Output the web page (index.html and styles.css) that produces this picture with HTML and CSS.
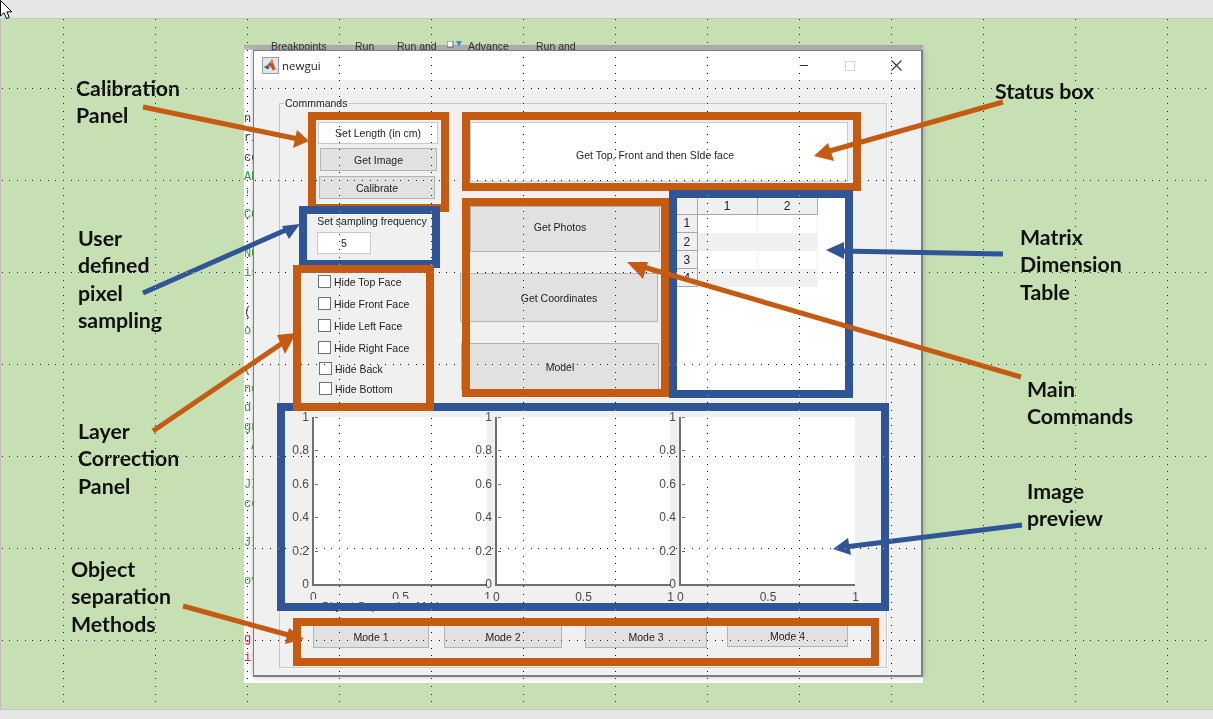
FILE: index.html
```html
<!DOCTYPE html>
<html>
  <head>
    <title>newgui annotated</title>
    <link rel="stylesheet" href="styles.css">
  </head>
  <body>
    <div class="screen">
      <div class="top-bar"></div>
      <div class="desktop"></div>
      <div class="bottom-bar"></div>

      <!-- the matlab editor that peeks out behind the figure -->
      <div class="editor">
        <div class="toolbar">
          <span>Breakpoints</span>
          <span>Run</span>
          <span>Run and</span>
          <svg class="toolbar-icon" width="16" height="8" viewBox="0 0 16 8"><rect x="0" y="0" width="6" height="6" fill="#fff" stroke="#666"/><path d="M9 0l6 0-3 6z" fill="#4a8fc4"/></svg>
          <span>Advance</span>
          <span>Run and</span>
        </div>
        <pre class="code"><span>n 4</span>
<span>ri</span>
<span>cg</span>
<span class="green">AB</span>
<span class="green">'</span>
<span class="green">CO</span>

<span class="green">NG</span>
<span class="green">is</span>

<span>('</span>
<span class="green">or</span>

<span>('</span>
<span class="green">ng</span>
<span class="green">d</span>
<span class="green">gn</span>
<span class="green"> A</span>

<span class="green">JI</span>
<span class="green">ce</span>

<span class="green">JI</span>

<span class="green">ov</span>


<span class="red">g</span>
<span class="red">ir</span></pre>
      </div>

      <div class="window">
        <div class="titlebar">
          <svg class="app-icon" width="17" height="17" viewBox="0 0 17 17">
            <rect x="0.5" y="0.5" width="16" height="16" fill="#dfe6ee" stroke="#9a9a9a"/>
            <path d="M2 10l3-1.500 3-3.500 2-3 3 9 2 2-2.500-1-1.500 2-2-4-1.500-1-2.500 2z" fill="#c8511b"/>
            <path d="M2 10l3-1.500 3 2-2.500 2z" fill="#2f6fa8"/>
            <path d="M8 5l2-3 1 6z" fill="#e88a2c"/>
          </svg>
          <span class="window-title">newgui</span>
          <div class="window-controls">
            <span class="ctl-min"></span>
            <span class="ctl-max"></span>
            <svg class="ctl-close" width="11" height="11" viewBox="0 0 11 11"><path d="M0.500 0.500l10 10M10.500 0.500l-10 10" stroke="#333" stroke-width="1.100" fill="none"/></svg>
          </div>
        </div>
        <div class="window-body">
          <fieldset class="panel">
            <legend>Commmands</legend>
            <div class="controls">
              <div class="left-col">
                <div class="edit set-length">Set Length (in cm)</div>
                <button class="btn get-image">Get Image</button>
                <button class="btn calibrate">Calibrate</button>
                <div class="sampling-label">Set sampling frequency</div>
                <div class="edit sampling-input">5</div>
                <div class="checks">
                  <label class="check"><span class="box"></span>Hide Top Face</label>
                  <label class="check"><span class="box"></span>Hide Front Face</label>
                  <label class="check"><span class="box"></span>Hide Left Face</label>
                  <label class="check"><span class="box"></span>Hide Right Face</label>
                  <label class="check shifted"><span class="box"></span>Hide Back</label>
                  <label class="check shifted"><span class="box"></span>Hide Bottom</label>
                </div>
              </div>
              <div class="status">Get Top, Front and then SIde face</div>
              <div class="main-col">
                <button class="btn get-photos">Get Photos</button>
                <button class="btn get-coords">Get Coordinates</button>
                <button class="btn model">Model</button>
              </div>
              <div class="table-wrap">
                <table class="matrix">
                  <tr><th></th><th>1</th><th>2</th></tr>
                  <tr><th>1</th><td></td><td></td></tr>
                  <tr class="odd"><th>2</th><td></td><td></td></tr>
                  <tr><th>3</th><td></td><td></td></tr>
                  <tr class="odd"><th>4</th><td></td><td></td></tr>
                </table>
              </div>
            </div>

            <div class="plots">
              <div class="axes">
                <div class="y-ticks"><span>1</span><span>0.8</span><span>0.6</span><span>0.4</span><span>0.2</span><span>0</span></div>
                <div class="x-ticks"><span>0</span><span>0.5</span><span>1</span></div>
              </div>
              <div class="axes">
                <div class="y-ticks"><span>1</span><span>0.8</span><span>0.6</span><span>0.4</span><span>0.2</span><span>0</span></div>
                <div class="x-ticks"><span>0</span><span>0.5</span><span>1</span></div>
              </div>
              <div class="axes">
                <div class="y-ticks"><span>1</span><span>0.8</span><span>0.6</span><span>0.4</span><span>0.2</span><span>0</span></div>
                <div class="x-ticks"><span>0</span><span>0.5</span><span>1</span></div>
              </div>
              <div class="mode-title">Object Separation Mode:</div>
            </div>

            <div class="modes">
              <button class="btn mode-1">Mode 1</button>
              <button class="btn mode-2">Mode 2</button>
              <button class="btn mode-3">Mode 3</button>
              <button class="btn mode-4">Mode 4</button>
            </div>
          </fieldset>
        </div>
      </div>

      <!-- annotation boxes and arrows, drawn on top of the screenshot -->
      <svg class="marks" width="1213" height="719" viewBox="0 0 1213 719">
        <rect class="inner-line" x="316.500" y="120.500" width="124" height="83"/>
        <g class="orange-box">
          <rect x="312" y="116" width="133" height="92"/>
          <rect x="466" y="116" width="391" height="71"/>
          <rect x="466" y="202" width="199" height="191"/>
        </g>
        <g class="blue-box">
          <rect x="303" y="210" width="133" height="54"/>
          <rect x="673" y="194" width="176" height="200"/>
          <rect x="281" y="407" width="604" height="200"/>
        </g>
        <g class="orange-box">
          <rect x="297" y="269" width="133" height="138"/>
          <rect x="297" y="622" width="578" height="40"/>
        </g>
        <g class="orange-arrow">
          <line x1="143" y1="107" x2="298" y2="139"/>
          <polygon points="309,141 293,148 297,130"/>
          <line x1="1003" y1="102" x2="826" y2="152"/>
          <polygon points="814,156 828,143 834,161"/>
          <line x1="1021" y1="377" x2="640" y2="266"/>
          <polygon points="627,262 648,262 643,279"/>
          <line x1="153" y1="431" x2="284" y2="342"/>
          <polygon points="296,333 277,335 285,354"/>
          <line x1="183" y1="606" x2="292" y2="636"/>
          <polygon points="304,639 289,628 285,644"/>
        </g>
        <g class="blue-arrow">
          <line x1="143" y1="293" x2="288" y2="229"/>
          <polygon points="300,224 282,226 289,239"/>
          <line x1="1003" y1="254" x2="840" y2="251"/>
          <polygon points="826,250 844,242 844,259"/>
          <line x1="1022" y1="525" x2="845" y2="547"/>
          <polygon points="833,549 848,538 851,555"/>
        </g>
      </svg>

      <div class="note note-calibration">Calibration<br>Panel</div>
      <div class="note note-user">User<br>defined<br>pixel<br>sampling</div>
      <div class="note note-layer">Layer<br>Correction<br>Panel</div>
      <div class="note note-object">Object<br>separation<br>Methods</div>
      <div class="note note-status">Status box</div>
      <div class="note note-matrix">Matrix<br>Dimension<br>Table</div>
      <div class="note note-main">Main<br>Commands</div>
      <div class="note note-image">Image<br>preview</div>

      <!-- snap grid of the slide editor, it inverts whatever is under it -->
      <svg class="grid-dots" width="1213" height="719" viewBox="0 0 1213 719">
        <g class="dots-h">
          <line x1="1.67" x2="1213" y1="88.5" y2="88.5"/>
          <line x1="1.67" x2="1213" y1="180.500" y2="180.500"/>
          <line x1="1.67" x2="1213" y1="272.500" y2="272.500"/>
          <line x1="1.67" x2="1213" y1="364.500" y2="364.500"/>
          <line x1="1.67" x2="1213" y1="456.500" y2="456.500"/>
          <line x1="1.67" x2="1213" y1="548.500" y2="548.500"/>
          <line x1="1.67" x2="1213" y1="640.500" y2="640.500"/>
        </g>
        <g class="dots-v">
          <line y1="19" y2="709" x1="63.500" x2="63.500"/>
          <line y1="19" y2="709" x1="155.500" x2="155.500"/>
          <line y1="19" y2="709" x1="247.500" x2="247.500"/>
          <line y1="19" y2="709" x1="339.500" x2="339.500"/>
          <line y1="19" y2="709" x1="431.500" x2="431.500"/>
          <line y1="19" y2="709" x1="523.500" x2="523.500"/>
          <line y1="19" y2="709" x1="615.500" x2="615.500"/>
          <line y1="19" y2="709" x1="707.500" x2="707.500"/>
          <line y1="19" y2="709" x1="799.500" x2="799.500"/>
          <line y1="19" y2="709" x1="891.500" x2="891.500"/>
          <line y1="19" y2="709" x1="983.500" x2="983.500"/>
          <line y1="19" y2="709" x1="1075.500" x2="1075.500"/>
          <line y1="19" y2="709" x1="1167.500" x2="1167.500"/>
        </g>
      </svg>

      <svg class="cursor" width="14" height="20" viewBox="0 0 14 20">
        <path d="M0.500 0.500v15.500l3.500-3.300 2.500 5.800 2.800-1.200-2.500-5.500h5z" fill="#fff" stroke="#000"/>
      </svg>
    </div>
  </body>
</html>
```

FILE: styles.css
```css
html, body {
  margin: 0;
  padding: 0;
}
.screen {
  position: relative;
  width: 1213px;
  height: 719px;
  display: flex;
  flex-direction: column;
  overflow: hidden;
  font-family: "Liberation Sans", Arial, sans-serif;
  background-color: #c6e0b4;
}
.top-bar {
  height: 18px;
  background-color: #e6e6e6;
  border-bottom: 1px solid #c4c4c4;
}
.desktop {
  flex: 1;
  background-color: #c6e0b4;
  border-left: 1px solid #bdbdbd;
}
.bottom-bar {
  height: 9px;
  background-color: #e6e6e6;
  border-top: 1px solid #c4c4c4;
}

/* editor behind the figure */
.editor {
  position: absolute;
  left: 244px;
  top: 45px;
  width: 679px;
  height: 638px;
  background-color: #fff;
}
.toolbar {
  display: grid;
  grid-template-columns: 84px 42px 50px 21px 68px auto;
  padding-left: 27px;
  height: 5px;
  background: linear-gradient(#a9a9a9, #c2c2c2);
  font-size: 10.5px;
  color: #333;
}
.toolbar span {
  margin-top: -6px;
  line-height: 14px;
}
.toolbar-icon {
  margin-top: -4px;
}
.code {
  margin: 60px 0 0 0;
  width: 9px;
  overflow: hidden;
  font-family: "Liberation Mono", monospace;
  font-size: 12px;
  line-height: 19.25px;
  color: #444;
}
.green {
  color: #3f9a3f;
}
.red {
  color: #e8202a;
}

/* matlab figure */
.window {
  position: absolute;
  left: 253px;
  top: 50px;
  width: 667px;
  height: 624px;
  display: flex;
  flex-direction: column;
  background-color: #f0f0f0;
  border: 1px solid #7d7d7d;
  border-width: 1px 2px 2px 1px;
  box-shadow: 0 0 6px rgba(0, 0, 0, 0.25);
}
.titlebar {
  height: 29px;
  display: flex;
  align-items: center;
  background-color: #fff;
  padding-left: 8px;
}
.app-icon {
  margin-right: 3px;
}
.window-title {
  font-family: "Open Sans", sans-serif;
  font-size: 11.5px;
  color: #222;
}
.window-controls {
  margin-left: auto;
  display: flex;
  align-items: center;
}
.ctl-min {
  width: 9px;
  height: 1px;
  background-color: #333;
  margin-right: 37px;
}
.ctl-max {
  width: 8px;
  height: 8px;
  border: 1px solid #d4d4d4;
  margin-right: 36px;
}
.ctl-close {
  margin-right: 19px;
}
.window-body {
  flex: 1;
  padding: 17px 33px 0 25px;
}

.panel {
  margin: 0;
  height: 569px;
  width: 606px;
  padding: 0;
  box-sizing: content-box;
  border: 1px solid #c6c6c6;
  box-shadow: 1px 1px 0 #fff;
  font-size: 10.5px;
  color: #222;
  position: relative;
}
.panel legend {
  margin-left: 4px;
  padding: 0 1px;
  line-height: 12px;
  font-size: 10.5px;
}
.controls {
  display: grid;
  grid-template-columns: 143px 217px 171px;
  grid-template-rows: 60px 192px;
  row-gap: 16px;
  margin: 13px 0 0 37px;
}
.left-col {
  grid-row: 1 / 3;
  display: flex;
  flex-direction: column;
  align-items: flex-start;
}
.left-col > * {
  flex-shrink: 0;
}
.edit {
  box-sizing: border-box;
  background-color: #fff;
  border: 1px solid #c9c9c9;
  display: flex;
  align-items: center;
  justify-content: center;
}
.btn {
  display: block;
  padding: 0;
  box-sizing: border-box;
  background-color: #e1e1e1;
  border: 1px solid #b4b4b4;
  border-radius: 0;
  font-family: "Liberation Sans", Arial, sans-serif;
  font-size: 10.5px;
  color: #222;
}
.set-length {
  width: 120px;
  height: 22px;
  margin-left: 1px;
}
.get-image {
  width: 117px;
  height: 23px;
  margin: 4px 0 0 3px;
}
.calibrate {
  width: 116px;
  height: 23px;
  margin: 5px 0 0 2px;
}
.sampling-label {
  width: 120px;
  margin: 15px 0 0 -5px;
  text-align: center;
  white-space: nowrap;
  line-height: 14px;
}
.sampling-input {
  width: 54px;
  height: 22px;
  margin-top: 4px;
}
.checks {
  display: flex;
  flex-direction: column;
  margin: 21px 0 0 1px;
}
.check {
  display: flex;
  align-items: center;
  height: 13px;
  margin-bottom: 9px;
  white-space: nowrap;
}
.check:nth-child(4) {
  margin-bottom: 8px;
}
.check:nth-child(5) {
  margin-bottom: 7px;
}
.box {
  box-sizing: border-box;
  width: 13px;
  height: 13px;
  margin-right: 3px;
  background-color: #fff;
  border: 1px solid #707070;
}
.shifted {
  margin-left: 1px;
}
.status {
  grid-column: 2 / 4;
  margin-left: 10px;
  display: flex;
  align-items: center;
  justify-content: center;
  background-color: #fff;
  border: 1px solid #c9c9c9;
  padding: 6px 8px 0 0;
  box-sizing: border-box;
}
.main-col {
  grid-column: 2;
  grid-row: 2;
  display: flex;
  flex-direction: column;
  align-items: flex-start;
}
.get-photos {
  width: 190px;
  height: 46px;
  margin: 8px 0 0 10px;
  padding: 0 10px 4px 0;
}
.get-coords {
  width: 198px;
  height: 49px;
  margin: 21px 0 0 0;
}
.model {
  width: 198px;
  height: 47px;
  margin: 21px 0 0 1px;
}
.table-wrap {
  grid-column: 3;
  grid-row: 2;
  background-color: #fff;
}
.matrix {
  border-collapse: collapse;
  table-layout: fixed;
  width: 140px;
  font-size: 12px;
}
.matrix th {
  background-color: #f0f0f0;
  font-weight: normal;
  padding: 0;
  height: 18px;
  border-right: 1px solid #a8a8a8;
  border-bottom: 1px solid #a8a8a8;
  box-sizing: border-box;
}
.matrix tr:first-child th {
  height: 16px;
  width: 60px;
}
.matrix tr th:first-child,
.matrix tr:first-child th:first-child {
  width: 20px;
}
.matrix td {
  padding: 0;
  height: 18px;
  border-right: 1px solid #f3f3f3;
}
.matrix .odd td {
  background-color: #f0f0f0;
}

.plots {
  position: relative;
  display: flex;
  gap: 8px;
  height: 168px;
  margin: 27px 0 0 32px;
}
.axes {
  position: relative;
  box-sizing: border-box;
  width: 175px;
  height: 169px;
  background-color: #fff;
  border-left: 2px solid #707070;
  border-bottom: 2px solid #707070;
}
.axes:nth-child(3) {
  width: 176px;
  margin-left: 1px;
}
.y-ticks {
  position: absolute;
  top: -7px;
  bottom: -7px;
  right: 100%;
  margin-right: 5px;
  display: flex;
  flex-direction: column;
  justify-content: space-between;
  align-items: flex-end;
  font-size: 12px;
  line-height: 14px;
  color: #4a4a4a;
}
.y-ticks span {
  position: relative;
}
.y-ticks span::after {
  content: "";
  position: absolute;
  left: 100%;
  top: 7px;
  margin-left: 6px;
  width: 3px;
  height: 1px;
  background-color: #707070;
}
.x-ticks {
  position: absolute;
  top: 100%;
  left: -4px;
  right: -4px;
  margin-top: 6px;
  display: flex;
  justify-content: space-between;
  font-size: 12px;
  line-height: 14px;
  color: #4a4a4a;
}
.mode-title {
  position: absolute;
  left: 0;
  top: 182px;
  width: 173px;
  height: 14px;
  padding-left: 9px;
  background-color: #f0f0f0;
  font-size: 11.5px;
  line-height: 14px;
  color: #333;
  white-space: nowrap;
}
.modes {
  display: flex;
  align-items: flex-start;
  margin: 38px 0 0 33px;
}
.modes .btn {
  height: 25px;
  padding-top: 3px;
}
.mode-1 {
  width: 116px;
}
.mode-2 {
  width: 118px;
  margin-left: 15px;
}
.mode-3 {
  width: 122px;
  margin-left: 23px;
}
.mode-4 {
  width: 121px;
  margin-left: 20px;
  margin-top: -1px;
}

/* annotation layer */
.marks {
  position: absolute;
  left: 0;
  top: 0;
}
.inner-line {
  fill: none;
  stroke: #f9f9f9;
}
.orange-box rect {
  fill: none;
  stroke: #c55a11;
  stroke-width: 8;
}
.blue-box rect {
  fill: none;
  stroke: #2f5597;
  stroke-width: 8;
}
.orange-arrow line {
  stroke: #c55a11;
  stroke-width: 5;
}
.orange-arrow polygon {
  fill: #c55a11;
}
.blue-arrow line {
  stroke: #2f5597;
  stroke-width: 5;
}
.blue-arrow polygon {
  fill: #2f5597;
}

.note {
  position: absolute;
  font-family: Lato, "Open Sans", sans-serif;
  font-weight: 700;
  font-size: 21.3px;
  line-height: 27.3px;
  color: #111;
  white-space: nowrap;
}
.note-calibration {
  left: 76px;
  top: 75px;
}
.note-user {
  left: 78px;
  top: 225px;
}
.note-layer {
  left: 78px;
  top: 418px;
}
.note-object {
  left: 71px;
  top: 556px;
}
.note-status {
  left: 995px;
  top: 78px;
}
.note-matrix {
  left: 1020px;
  top: 224px;
}
.note-main {
  left: 1027px;
  top: 376px;
}
.note-image {
  left: 1027px;
  top: 478px;
}

.grid-dots {
  position: absolute;
  left: 0;
  top: 0;
  mix-blend-mode: difference;
  pointer-events: none;
}
.grid-dots line {
  stroke: #fff;
  stroke-width: 1;
  stroke-dasharray: 1 6.667;
  shape-rendering: crispEdges;
}
.cursor {
  position: absolute;
  left: 0;
  top: 0;
}
```
